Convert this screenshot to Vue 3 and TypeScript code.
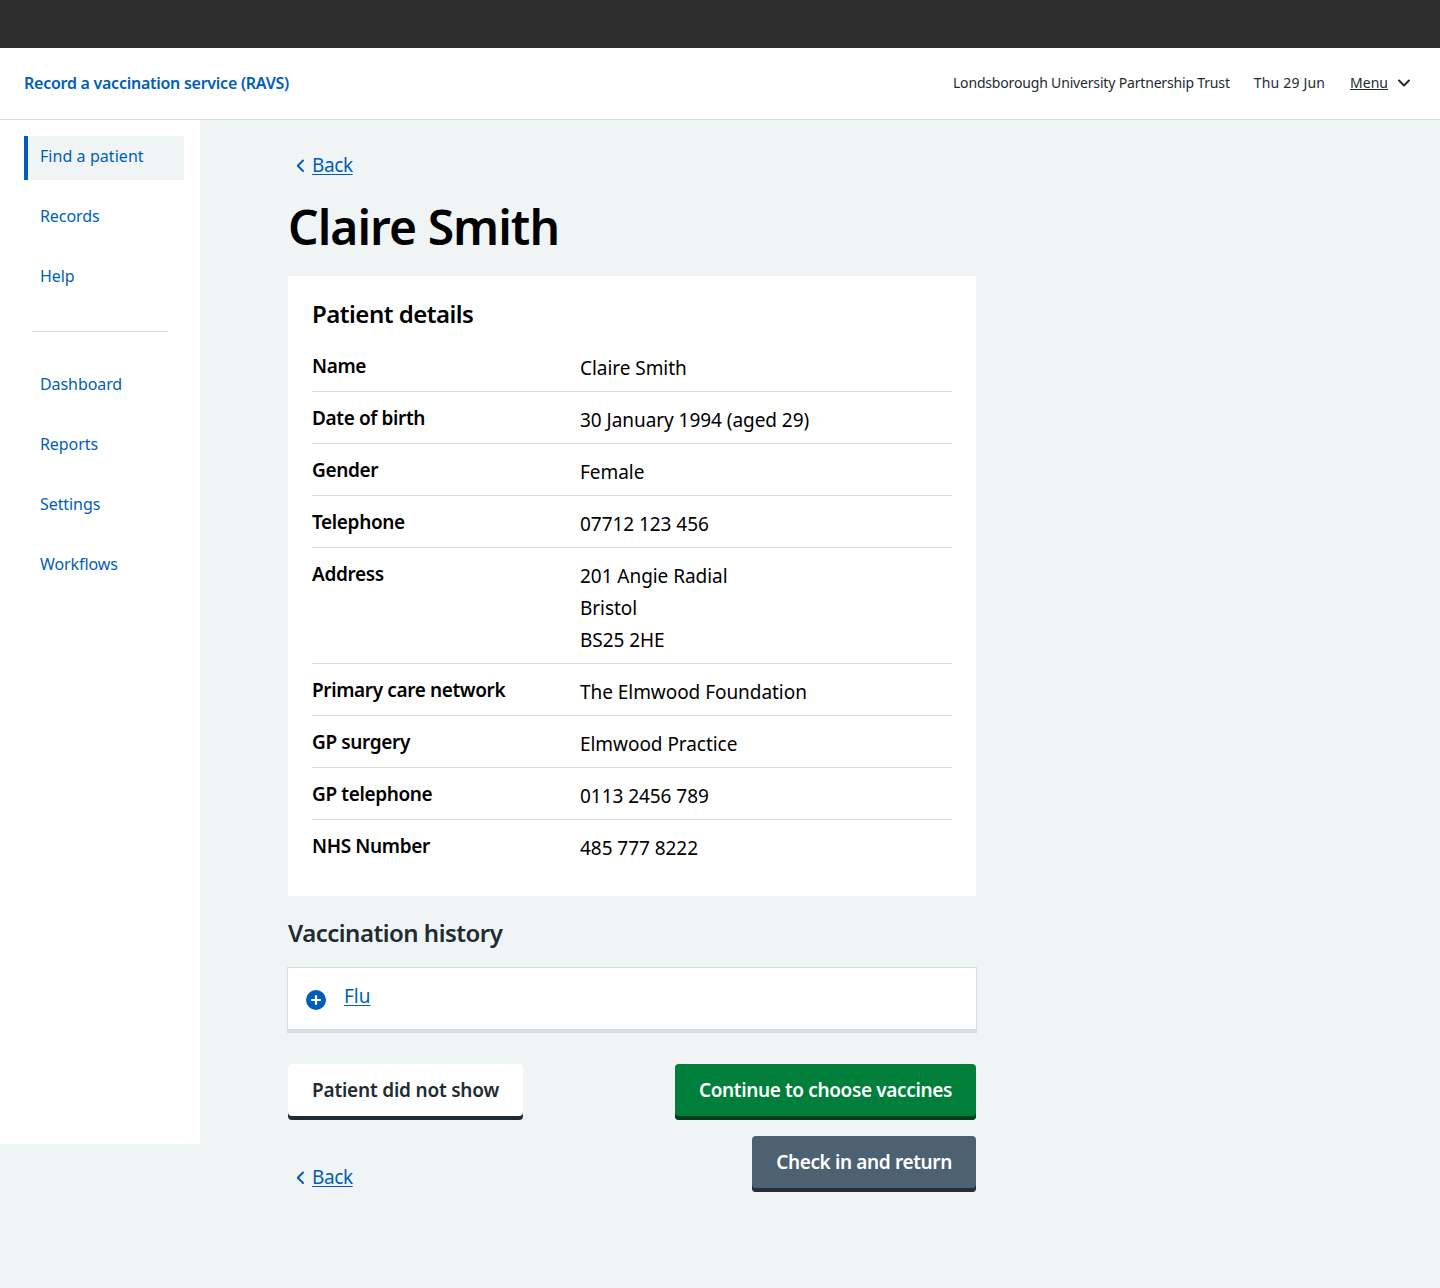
<script setup lang="ts">
interface Row { label: string; lines: string[] }
const rows: Row[] = [
  { label: 'Name', lines: ['Claire Smith'] },
  { label: 'Date of birth', lines: ['30 January 1994 (aged 29)'] },
  { label: 'Gender', lines: ['Female'] },
  { label: 'Telephone', lines: ['07712 123 456'] },
  { label: 'Address', lines: ['201 Angie Radial', 'Bristol', 'BS25 2HE'] },
  { label: 'Primary care network', lines: ['The Elmwood Foundation'] },
  { label: 'GP surgery', lines: ['Elmwood Practice'] },
  { label: 'GP telephone', lines: ['0113 2456 789'] },
  { label: 'NHS Number', lines: ['485 777 8222'] },
]
const navA = ['Records', 'Help']
const navB = ['Dashboard', 'Reports', 'Settings', 'Workflows']
</script>

<template>
  <div class="page">
    <div class="topbar"></div>
    <header class="header">
      <a class="service">Record a vaccination service (RAVS)</a>
      <div class="meta">
        <span class="trust">Londsborough University Partnership Trust</span>
        <span class="date">Thu 29 Jun</span>
        <span class="menu">
          <u>Menu</u>
          <svg width="16" height="16" viewBox="0 0 16 16" fill="none"><path d="M3 5.5 8 10.5 13 5.5" stroke="#212b32" stroke-width="2" stroke-linecap="round" stroke-linejoin="round"/></svg>
        </span>
      </div>
    </header>
    <div class="body">
      <aside class="side">
        <a class="nav active">Find a patient</a>
        <a v-for="n in navA" :key="n" class="nav">{{ n }}</a>
        <hr class="rule" />
        <a v-for="n in navB" :key="n" class="nav">{{ n }}</a>
      </aside>
      <main class="main">
        <a class="back">
          <svg width="12" height="16" viewBox="0 0 12 16" fill="none"><path d="M9 2.5 3.8 7.8 9 13" stroke="#005eb8" stroke-width="2" stroke-linecap="round" stroke-linejoin="round"/></svg>
          <u>Back</u>
        </a>
        <h1>Claire Smith</h1>
        <section class="card">
          <h2>Patient details</h2>
          <div v-for="r in rows" :key="r.label" class="row">
            <div class="label">{{ r.label }}</div>
            <div class="value"><div v-for="l in r.lines" :key="l">{{ l }}</div></div>
          </div>
        </section>
        <h3>Vaccination history</h3>
        <div class="details">
          <svg width="20" height="20" viewBox="0 0 20 20"><circle cx="10" cy="10" r="10" fill="#005eb8"/><path d="M10 6v8M6 10h8" stroke="#fff" stroke-width="2.2" stroke-linecap="round"/></svg>
          <a><u>Flu</u></a>
        </div>
        <div class="actions">
          <div class="col-left">
            <button class="btn white">Patient did not show</button>
            <a class="back bottom">
              <svg width="12" height="16" viewBox="0 0 12 16" fill="none"><path d="M9 2.5 3.8 7.8 9 13" stroke="#005eb8" stroke-width="2" stroke-linecap="round" stroke-linejoin="round"/></svg>
              <u>Back</u>
            </a>
          </div>
          <div class="col-right">
            <button class="btn green">Continue to choose vaccines</button>
            <button class="btn grey">Check in and return</button>
          </div>
        </div>
      </main>
    </div>
  </div>
</template>

<style>
html, body { margin: 0; background: #f0f4f5; }
</style>

<style scoped>
.page { min-height: 1288px; background: #f0f4f5; font-family: "Noto Sans", "Open Sans", sans-serif; color: #212b32; }
.topbar { height: 48px; background: #2d2d2d; }
.header { height: 72px; box-sizing: border-box; background: #fff; border-bottom: 1px solid #d8dde0; display: flex; align-items: center; justify-content: space-between; padding: 0 28px 2px 24px; }
.service { color: #005eb8; font-size: 16px; font-weight: 600; letter-spacing: -0.26px; }
.meta { display: flex; align-items: center; gap: 24px; font-size: 14px; }
.trust { letter-spacing: -0.17px; }
.date { letter-spacing: 0.18px; margin-right: 1px; }
.menu { display: flex; align-items: center; gap: 8px; }
.body { display: flex; align-items: flex-start; }
.side { width: 200px; height: 1024px; box-sizing: border-box; background: #fff; padding: 16px 16px 0 24px; display: flex; flex-direction: column; flex: none; }
.nav { height: 44px; margin-bottom: 16px; padding-left: 16px; padding-bottom: 4px; display: flex; align-items: center; font-size: 16px; letter-spacing: -0.08px; color: #005eb8; box-sizing: border-box; }
.active { background: #f0f4f5; border-left: 4px solid #005eb8; padding-left: 12px; letter-spacing: 0.06px; }
.rule { width: 136px; margin: 15px 0 32px 8px; border: 0; border-top: 1px solid #d8dde0; }
.main { width: 688px; margin-left: 88px; padding-top: 32px; }
.back { display: flex; align-items: center; gap: 6px; height: 26px; font-size: 19px; letter-spacing: -0.4px; color: #005eb8; padding-left: 6px; }
.back svg { margin-top: 2px; }
.back u { text-underline-offset: 2px; }
h1 { margin: 15px 0 0; font-size: 48px; line-height: 68px; font-weight: 600; color: #000; letter-spacing: -0.95px; }
.card { margin-top: 15px; height: 620px; box-sizing: border-box; background: #fff; padding: 24px; }
h2 { margin: 0; height: 40px; font-size: 24px; line-height: 28px; font-weight: 600; color: #000; letter-spacing: -0.5px; }
.row { display: grid; grid-template-columns: 268px 1fr; padding: 12px 0 7px; border-bottom: 1px solid #d8dde0; font-size: 19px; color: #000; }
.row:last-child { border-bottom: 0; }
.label { font-weight: 600; line-height: 28px; letter-spacing: -0.37px; }
.value { line-height: 32px; letter-spacing: -0.05px; }
h3 { margin: 19px 0 0; font-size: 24px; line-height: 36px; font-weight: 600; letter-spacing: -0.5px; }
.details { margin-top: 16px; height: 66px; box-sizing: border-box; background: #fff; border: 1px solid #d8dde0; border-bottom: 4px solid #d8dde0; display: flex; align-items: flex-start; padding: 22px 0 0 18px; gap: 18px; font-size: 19px; color: #005eb8; margin-left: -1px; width: 690px; }
.details a { margin-top: -7px; line-height: 26px; }
.details u { text-underline-offset: 2px; }
.actions { display: flex; justify-content: space-between; margin-top: 31px; }
.col-left { display: flex; flex-direction: column; align-items: flex-start; }
.col-right { display: flex; flex-direction: column; align-items: flex-end; gap: 16px; }
.btn { height: 56px; box-sizing: border-box; padding: 0 24px 4px; border: 0; border-radius: 4px; font: 600 19px "Noto Sans", "Open Sans", sans-serif; letter-spacing: -0.36px; }
.white { background: #fff; color: #212b32; box-shadow: inset 0 -4px 0 #212b32; letter-spacing: -0.2px; }
.green { background: #007f3b; color: #fff; box-shadow: inset 0 -4px 0 #00401e; }
.grey { background: #4c6272; color: #fff; box-shadow: inset 0 -4px 0 #263139; }
.bottom { margin-top: 44px; }
</style>
